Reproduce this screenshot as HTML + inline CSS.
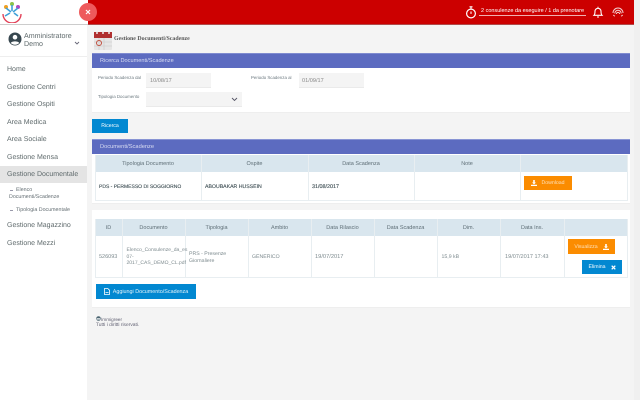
<!DOCTYPE html>
<html><head><meta charset="utf-8"><style>
html,body{margin:0;padding:0;width:640px;height:400px;overflow:hidden;background:#f4f4f4;font-family:"Liberation Sans",sans-serif;text-rendering:geometricPrecision}
.a{position:absolute;white-space:nowrap}
.n{font-size:7px;color:#5f6a6c;left:7px}
.v{position:absolute;width:1px;background:#e8eef1}
.th{position:absolute;font-size:5.5px;color:#5e6e76;text-align:center;white-space:nowrap}
.td{position:absolute;font-size:5.2px;color:#7f8c90;white-space:nowrap;line-height:6.6px}
.d{position:absolute;font-size:5.4px;color:#3f4f55;white-space:nowrap;line-height:6.6px;-webkit-text-stroke:.12px #3f4f55}
.l{font-size:4.4px;color:#6d7a80}
.btn{position:absolute;color:#fff;font-size:5.2px;display:flex;align-items:center;justify-content:center;white-space:nowrap}
</style></head><body>
<div class="a" style="left:0;top:0;width:88px;height:24px;background:#fff;border-bottom:1px solid #ccc"></div>
<div class="a" style="left:88px;top:0;width:546px;height:24px;background:#cc0000;border-bottom:1px solid #b04a4a"></div>
<div class="a" style="left:634px;top:0;width:6px;height:400px;background:#f0f0f0"></div>
<div class="a" style="left:0;top:25px;width:87px;height:375px;background:#fff"></div>

<svg class="a" style="left:1px;top:1px" width="22" height="22" viewBox="0 0 22 22">
<path d="M2 13a9 9 0 0 0 18 0" fill="none" stroke="#e2435a" stroke-width="1.4"/>
<circle cx="5" cy="6" r="2" fill="#f0a020"/><circle cx="11" cy="3" r="2" fill="#8bc34a"/><circle cx="17" cy="6" r="2" fill="#b04ac0"/>
<path d="M5 7l5 4M11 4v6M17 7l-5 4M9 12l-5 3M13 12l4 3" stroke="#3fa0d8" stroke-width="1.6"/>
</svg>
<div class="a" style="left:79px;top:3px;width:18px;height:18px;border-radius:50%;background:#ee5a5c"></div>
<svg class="a" style="left:85px;top:9px" width="6" height="6" viewBox="0 0 6 6"><path d="M1 1l4 4M5 1l-4 4" stroke="#fff" stroke-width="1.2"/></svg>

<svg class="a" style="left:464px;top:5px" width="14" height="15" viewBox="0 0 14 15" fill="none" stroke="#fff"><circle cx="7" cy="8.5" r="4.4" stroke-width="1.2"/><path d="M5.5 1.8h3M7 2v2M7 6.500v2.400" stroke-width="1.1"/></svg>
<div class="a" style="left:479px;top:8px;width:107px;box-sizing:border-box;font-size:5.500px;color:#fff;border-bottom:1px solid #f0b0b0;padding:0 0 0 2px;line-height:6.500px">2 consulenze da eseguire / 1 da prenotare</div>
<svg class="a" style="left:592px;top:6px" width="12" height="12" viewBox="0 0 12 12" fill="none" stroke="#fff" stroke-width="1.1"><path d="M2 9.300c1-1 1-2 1-4a3 3 0 0 1 6 0c0 2 0 3 1 4z"/><path d="M5 11h2M6 .8v1"/></svg>
<svg class="a" style="left:612px;top:6px" width="12" height="12" viewBox="0 0 12 12" fill="none" stroke="#f3d0d0" stroke-width="1"><path d="M1 7a5 5 0 0 1 10 0M2.800 7.500a3.200 3.200 0 0 1 6.400 0M4.400 8a1.600 1.600 0 0 1 3.200 0"/><path d="M1.300 9l1.500 1.300M10.700 9l-1.500 1.300"/></svg>

<!-- sidebar -->
<svg class="a" style="left:8px;top:32px" width="14" height="14" viewBox="0 0 14 14"><circle cx="7" cy="7" r="6.500" fill="#37474f"/><circle cx="7" cy="5.200" r="2.300" fill="#fff"/><path d="M2.800 11c1-2.200 7.400-2.200 8.400 0a6 6 0 0 1-8.400 0z" fill="#fff"/></svg>
<div class="a" style="left:24px;top:31.500px;font-size:7.100px;line-height:8.800px;color:#5f6a6c">Amministratore<br>Demo</div>
<svg class="a" style="left:74px;top:41px" width="6" height="5" viewBox="0 0 6 5"><path d="M1 1l2 2 2-2" fill="none" stroke="#667" stroke-width=".9"/></svg>
<div class="a" style="left:0;top:56px;width:87px;height:1px;background:#eee"></div>
<div class="a n" style="top:66px">Home</div>
<div class="a n" style="top:83.500px">Gestione Centri</div>
<div class="a n" style="top:101px">Gestione Ospiti</div>
<div class="a n" style="top:118.500px">Area Medica</div>
<div class="a n" style="top:136px">Area Sociale</div>
<div class="a n" style="top:153.500px">Gestione Mensa</div>
<div class="a" style="left:0;top:166px;width:87px;height:17px;background:#e4e4e4"></div>
<div class="a n" style="top:171px">Gestione Documentale</div>
<div class="a" style="left:10px;top:190px;width:3px;height:1px;background:#99a"></div>
<div class="a" style="left:9px;top:187px;font-size:5.300px;line-height:6.500px;color:#667075"><span style="margin-left:7px">Elenco</span><br>Documenti/Scadenze</div>
<div class="a" style="left:10px;top:210px;width:3px;height:1px;background:#99a"></div>
<div class="a" style="left:16px;top:207px;font-size:5.300px;line-height:6.500px;color:#667075">Tipologia Documentale</div>
<div class="a n" style="top:222px">Gestione Magazzino</div>
<div class="a n" style="top:239.500px">Gestione Mezzi</div>

<!-- page title -->
<svg class="a" style="left:94px;top:31px" width="18" height="19" viewBox="0 0 18 19"><rect x="0" y="1" width="18" height="18" rx="1" fill="#e6e6e6"/><rect x="0" y="1" width="18" height="6" fill="#b03030"/><path d="M3 0v3M9 0v3M15 0v3" stroke="#eee" stroke-width="1.500"/><path d="M0 11h18M0 15h18M5 7v12M10 7v12" stroke="#c8c8c8" stroke-width=".6"/><circle cx="5" cy="12" r="2.500" fill="none" stroke="#c05040" stroke-width="1"/></svg>
<div class="a" style="left:114px;top:36px;font-family:'Liberation Serif',serif;font-weight:bold;font-size:5.900px;color:#555">Gestione Documenti/Scadenze</div>

<!-- search panel -->
<div class="a" style="left:92px;top:53px;width:538px;height:59px;background:#fff;border-bottom:1px solid #eee"></div>
<div class="a" style="left:92px;top:53px;width:538px;height:15px;background:#5c6bc0;border-top:1px solid #7f8bd0;box-sizing:border-box"></div>
<div class="a" style="left:100px;top:58px;font-size:5.600px;color:#d8dcf2">Ricerca Documenti/Scadenze</div>
<div class="a l" style="left:98px;top:74.500px">Periodo Scadenza dal</div>
<div class="a" style="left:146px;top:73px;width:65px;height:14px;background:#f4f4f4;border-bottom:1px solid #eaeaea"></div>
<div class="a" style="left:150px;top:77.500px;font-size:5.600px;color:#888">10/08/17</div>
<div class="a l" style="left:251px;top:74.500px">Periodo Scadenza al</div>
<div class="a" style="left:299px;top:73px;width:65px;height:14px;background:#f4f4f4;border-bottom:1px solid #eaeaea"></div>
<div class="a" style="left:302px;top:77.500px;font-size:5.600px;color:#888">01/09/17</div>
<div class="a l" style="left:98px;top:93.500px">Tipologia Documento</div>
<div class="a" style="left:146px;top:92px;width:96px;height:14px;background:#f4f4f4;border-bottom:1px solid #eaeaea"></div>
<svg class="a" style="left:231px;top:97px" width="7" height="5" viewBox="0 0 7 5"><path d="M1 1l2.500 2.500L6 1" fill="none" stroke="#556" stroke-width=".9"/></svg>
<div class="btn" style="left:92px;top:119px;width:36px;height:14px;background:#0288d1">Ricerca</div>

<!-- documents panel -->
<div class="a" style="left:92px;top:139px;width:538px;height:64px;background:#fff;border-bottom:1px solid #eee"></div>
<div class="a" style="left:92px;top:139px;width:538px;height:15px;background:#5c6bc0;border-top:1px solid #8894d4;box-sizing:border-box"></div>
<div class="a" style="left:100px;top:143.500px;font-size:5.700px;color:#d8dcf2">Documenti/Scadenze</div>
<div class="a" style="left:95px;top:155px;width:532px;height:17px;background:#d9e6ee"></div>
<div class="a" style="left:95px;top:200px;width:532px;height:1px;background:#e8eef1"></div>
<div class="v" style="left:95px;top:155px;height:46px"></div>
<div class="v" style="left:201px;top:155px;height:46px"></div>
<div class="v" style="left:308px;top:155px;height:46px"></div>
<div class="v" style="left:414px;top:155px;height:46px"></div>
<div class="v" style="left:520px;top:155px;height:46px"></div>
<div class="v" style="left:627px;top:155px;height:46px"></div>
<div class="th" style="left:95px;width:106px;top:161px">Tipologia Documento</div>
<div class="th" style="left:201px;width:107px;top:161px">Ospite</div>
<div class="th" style="left:308px;width:106px;top:161px">Data Scadenza</div>
<div class="th" style="left:414px;width:106px;top:161px">Note</div>
<div class="d" style="left:99px;top:184px;font-size:5px">PDS - PERMESSO DI SOGGIORNO</div>
<div class="d" style="left:205px;top:184px;font-size:5.200px">ABOUBAKAR HUSSEIN</div>
<div class="d" style="left:312px;top:184px">31/08/2017</div>
<div class="btn" style="left:524px;top:176px;width:48px;height:14px;background:#fb8c00;color:#fde0b8"><svg width="6" height="6" viewBox="0 0 6 6" style="margin-right:4px"><path d="M2.200 0h1.600v2.500H5L3 4.400 1 2.500h1.200zM0 4.800h6V6H0z" fill="#fff"/></svg>Download</div>

<!-- second panel -->
<div class="a" style="left:92px;top:210px;width:538px;height:97px;background:#fff;border-bottom:1px solid #eee"></div>
<div class="a" style="left:95px;top:219px;width:532px;height:17px;background:#d9e6ee"></div>
<div class="a" style="left:95px;top:277px;width:532px;height:1px;background:#e8eef1"></div>
<div class="v" style="left:95px;top:219px;height:59px"></div>
<div class="v" style="left:122px;top:219px;height:59px"></div>
<div class="v" style="left:185px;top:219px;height:59px"></div>
<div class="v" style="left:248px;top:219px;height:59px"></div>
<div class="v" style="left:311px;top:219px;height:59px"></div>
<div class="v" style="left:374px;top:219px;height:59px"></div>
<div class="v" style="left:437px;top:219px;height:59px"></div>
<div class="v" style="left:500px;top:219px;height:59px"></div>
<div class="v" style="left:564px;top:219px;height:59px"></div>
<div class="v" style="left:627px;top:219px;height:59px"></div>
<div class="th" style="left:95px;width:27px;top:225px">ID</div>
<div class="th" style="left:122px;width:63px;top:225px">Documento</div>
<div class="th" style="left:185px;width:63px;top:225px">Tipologia</div>
<div class="th" style="left:248px;width:63px;top:225px">Ambito</div>
<div class="th" style="left:311px;width:63px;top:225px">Data Rilascio</div>
<div class="th" style="left:374px;width:63px;top:225px">Data Scadenza</div>
<div class="th" style="left:437px;width:63px;top:225px">Dim.</div>
<div class="th" style="left:500px;width:64px;top:225px">Data Ins.</div>
<div class="td" style="left:99px;top:254px;font-size:5.500px">526093</div>
<div class="td" style="left:126.500px;top:247px;font-size:5px">Elenco_Consulenze_da_es<br>07-<br>2017_CAS_DEMO_CL.pdf</div>
<div class="td" style="left:189px;top:251px">PRS - Presenze<br>Giornaliere</div>
<div class="td" style="left:252px;top:254px">GENERICO</div>
<div class="td" style="left:315px;top:254px;font-size:5.700px">19/07/2017</div>
<div class="td" style="left:441.500px;top:254px">15,9 kB</div>
<div class="td" style="left:505px;top:254px;font-size:5.600px">19/07/2017 17:43</div>
<div class="btn" style="left:568px;top:239px;width:47px;height:15px;background:#fb8c00;color:#fde0b8">Visualizza<svg width="6" height="6" viewBox="0 0 6 6" style="margin-left:5px"><path d="M2.200 0h1.600v2.500H5L3 4.400 1 2.500h1.200zM0 4.800h6V6H0z" fill="#fff"/></svg></div>
<div class="btn" style="left:582px;top:260px;width:40px;height:14px;background:#0288d1">Elimina<svg width="5" height="5" viewBox="0 0 5 5" style="margin-left:5px"><path d="M.7.700l3.600 3.600M4.300.700L.7 4.300" stroke="#fff" stroke-width="1.300"/></svg></div>
<div class="btn" style="left:96px;top:284px;width:100px;height:15px;background:#0288d1;color:#e6f4fb;font-size:5.400px"><svg width="6" height="7" viewBox="0 0 6 7" style="margin-right:3px"><path d="M.5.500h3.300L5.500 2.200v4.300h-5zM1.500 4.500h3" fill="none" stroke="#fff" stroke-width=".8"/></svg>Aggiungi Documento/Scadenza</div>

<!-- footer -->
<svg class="a" style="left:96px;top:316px" width="5" height="5" viewBox="0 0 5 5"><circle cx="2.500" cy="2.500" r="2.300" fill="#4a6470"/><rect x=".8" y="2.300" width="3.400" height="1.200" fill="#fff"/></svg>
<div class="a" style="left:101px;top:316.500px;font-size:4.700px;color:#667">Immigreer</div>
<div class="a" style="left:96px;top:322.500px;font-size:4.900px;color:#667">Tutti i diritti riservati.</div>
</body></html>
